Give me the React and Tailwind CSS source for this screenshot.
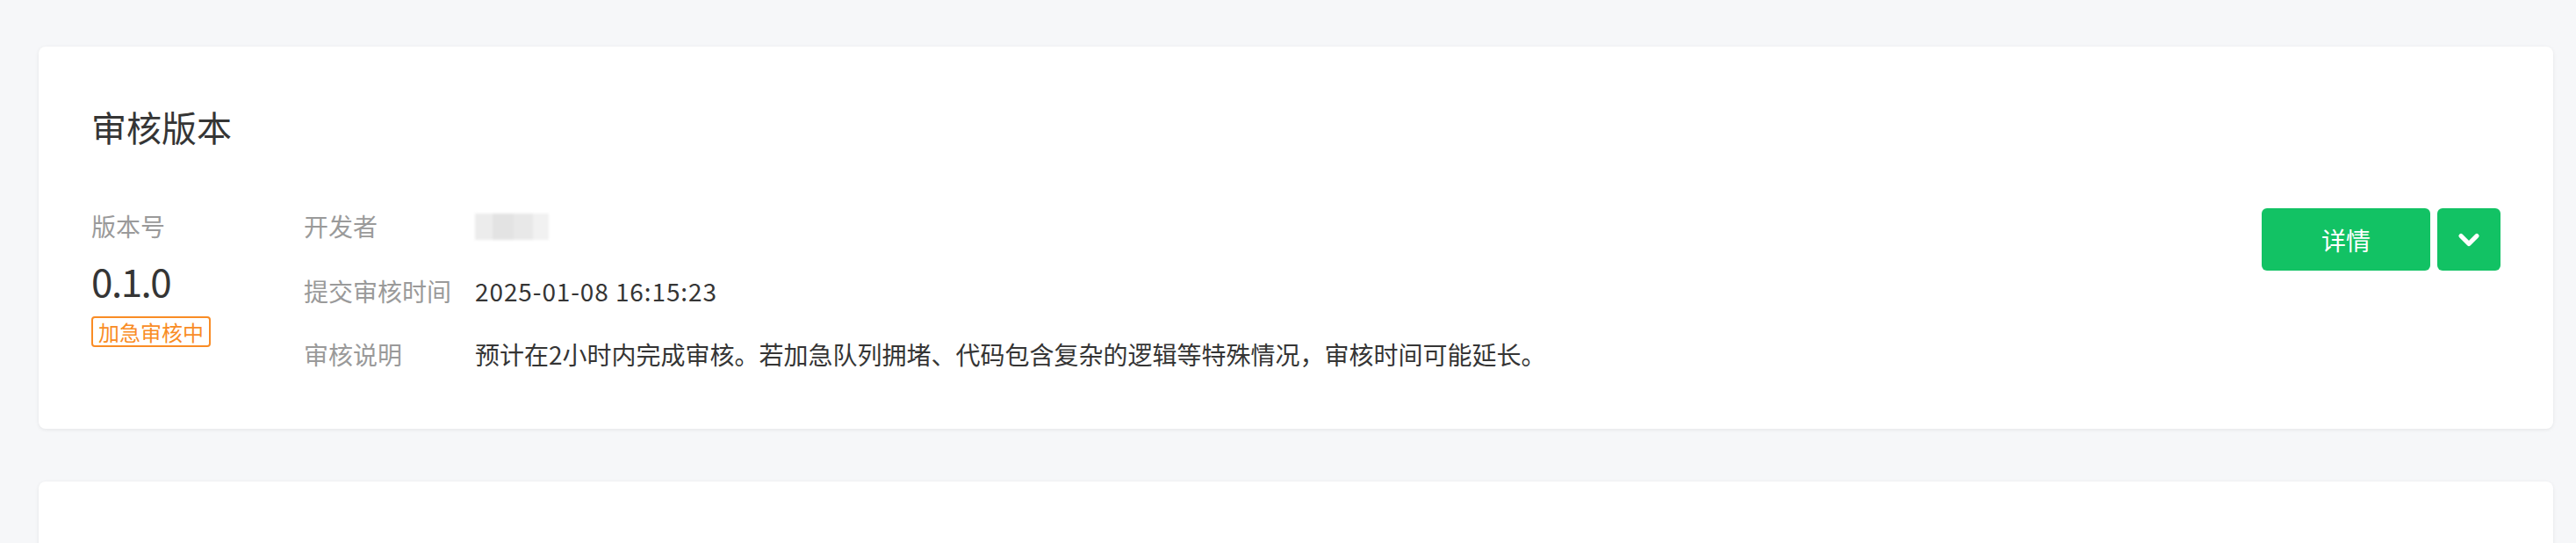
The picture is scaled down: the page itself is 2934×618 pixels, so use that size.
import { ChevronDown } from "lucide-react";

export default function App() {
  const rows = [
    { label: "开发者", value: null },
    { label: "提交审核时间", value: "2025-01-08 16:15:23", spaced: true },
    {
      label: "审核说明",
      value: "预计在2小时内完成审核。若加急队列拥堵、代码包含复杂的逻辑等特殊情况，审核时间可能延长。",
    },
  ];

  return (
    <div className="h-[618px] overflow-hidden bg-[#f6f7f9] pt-[53px] pl-[44px] pr-[26px] font-['Noto_Sans_CJK_SC','Noto_Sans',sans-serif] text-[#353535]">
      <div className="h-[435px] rounded-[8px] bg-white pt-[71px] pl-[60px] pr-[60px] shadow-[0_1px_4px_rgba(0,0,0,0.08)]">
        <h2 className="text-[40px] leading-[40px] font-normal">审核版本</h2>

        <div className="mt-[73px] flex items-start">
          {/* version */}
          <div className="w-[242px] shrink-0 pt-[6px]">
            <div className="text-[28px] leading-[28px] text-[#9a9a9a]">版本号</div>
            <div className="mt-[26px] text-[44px] leading-[44px] tracking-[-1.5px]">0.1.0</div>
            <div className="mt-[19px] inline-flex h-[35px] items-center rounded-[4px] border-2 border-[#f98c25] px-[6px] text-[24px] leading-[24px] text-[#f98c25]">
              加急审核中
            </div>
          </div>

          {/* info */}
          <div className="flex flex-col gap-[44px] pt-[6px]">
            {rows.map((row, idx) => (
              <div key={idx} className="flex text-[28px] leading-[28px]">
                <div className="w-[195px] shrink-0 text-[#9a9a9a]">{row.label}</div>
                {row.value ? (
                  <div className={row.spaced ? "tracking-[0.9px]" : ""}>{row.value}</div>
                ) : (
                  <div className="flex h-[30px] w-[84px] overflow-hidden blur-[1.5px]">
                    <div className="h-full w-[20px] bg-[#ececec]" />
                    <div className="h-full w-[24px] bg-[#e3e3e3]" />
                    <div className="h-full w-[22px] bg-[#e8e8e8]" />
                    <div className="h-full w-[18px] bg-[#f1f1f1]" />
                  </div>
                )}
              </div>
            ))}
          </div>

          {/* actions */}
          <div className="ml-auto flex gap-[8px]">
            <button className="flex h-[71px] w-[192px] items-center justify-center rounded-[6px] bg-[#12c264] text-[28px] text-white">
              详情
            </button>
            <button className="flex h-[71px] w-[72px] items-center justify-center rounded-[6px] bg-[#12c264] text-white">
              <ChevronDown className="h-[36px] w-[36px]" strokeWidth={3.5} />
            </button>
          </div>
        </div>
      </div>

      <div className="mt-[60px] h-[200px] rounded-[8px] bg-white shadow-[0_1px_4px_rgba(0,0,0,0.08)]" />
    </div>
  );
}
